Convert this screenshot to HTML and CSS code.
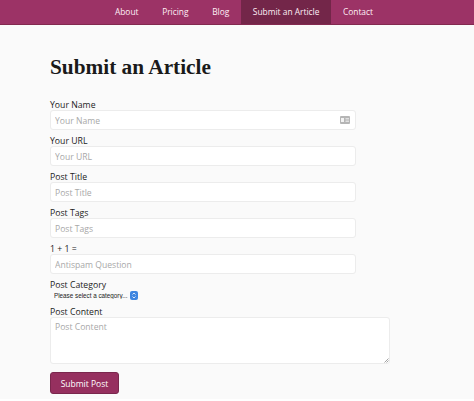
FILE: index.html
```html
<!DOCTYPE html>
<html lang="en">

<head>
    <meta charset="UTF-8">
    <meta name="viewport" content="width=device-width, initial-scale=1.0">
    <title>Submit an Article</title>
    <link rel="stylesheet" href="styles.css">
</head>

<body>
    <nav class="topnav">
        <a href="#">About</a>
        <a href="#">Pricing</a>
        <a href="#">Blog</a>
        <a href="#" class="active">Submit an Article</a>
        <a href="#">Contact</a>
    </nav>

    <main class="content">
        <h1 class="title">Submit an Article</h1>

        <form class="article-form">
            <label for="name" class="texto">Your Name</label>
            <div class="input-wrap">
                <input class="input" type="text" id="name" placeholder="Your Name">
                <svg class="card-icon" width="10" height="8" viewBox="0 0 10 8">
                    <rect width="10" height="8" rx="1" fill="#b5b5b5"></rect>
                    <rect x="1" y="2" width="3" height="4" fill="#f2f2f2"></rect>
                    <path d="M5.5 2.5H9M5.5 4H9M5.5 5.5H9" stroke="#f2f2f2" stroke-width="0.7"></path>
                </svg>
            </div>

            <label for="url" class="texto">Your URL</label>
            <input class="input" type="text" id="url" placeholder="Your URL">

            <label for="ptitle" class="texto">Post Title</label>
            <input class="input" type="text" id="ptitle" placeholder="Post Title">

            <label for="tags" class="texto">Post Tags</label>
            <input class="input" type="text" id="tags" placeholder="Post Tags">

            <label for="spam" class="texto">1 + 1 =</label>
            <input class="input" type="text" id="spam" placeholder="Antispam Question">

            <label for="category" class="texto">Post Category</label>
            <div class="select-wrap">
                <select class="select" id="category">
                    <option>Please select a category...</option>
                </select>
                <svg class="stepper" width="8" height="9" viewBox="0 0 8 9">
                    <rect width="8" height="9" rx="2" fill="#3f86e0"></rect>
                    <path d="M2.500 3.500L4 2l1.500 1.500M2.500 5.500L4 7l1.500-1.500" fill="none" stroke="#ffffff" stroke-width="0.8"></path>
                </svg>
            </div>

            <label for="body" class="texto">Post Content</label>
            <div class="input-wrap">
                <textarea class="input area" id="body" placeholder="Post Content"></textarea>
                <svg class="grip" width="5" height="5" viewBox="0 0 5 5">
                    <path d="M0.500 4.500L4.500 0.500M2.500 4.500L4.500 2.500" stroke="#8c8c8c" stroke-width="0.8"></path>
                </svg>
            </div>

            <button type="button" class="submit">Submit Post</button>
        </form>
    </main>
</body>
</html>
```

FILE: styles.css
```css
* {
    box-sizing: border-box;
}

body {
    margin: 0;
    height: 401px;
    overflow: hidden;
    background-color: #ffffff;
    color: #222222;
    font-family: "Open Sans", sans-serif;
}

.topnav {
    display: flex;
    justify-content: center;
    height: 25px;
    padding-left: 14px;
    background-color: #9c3366;
    border-bottom: 1px solid #82294f;
}

.topnav a {
    padding: 0 11.800px;
    color: #fff0f6;
    font-size: 8.400px;
    line-height: 24px;
    text-decoration: none;
}

.topnav a.active {
    background-color: #732649;
}

.content {
    height: 374px;
    padding: 0 50px;
    background-color: #fafafa;
}

.title {
    margin: 0;
    padding-top: 29px;
    height: 74px;
    color: #1a1a1a;
    font-family: "Liberation Serif", serif;
    font-size: 21.300px;
    line-height: 27px;
}

.article-form {
    display: flex;
    flex-direction: column;
    align-items: flex-start;
}

.texto {
    display: block;
    height: 11px;
    font-size: 8.700px;
    line-height: 12px;
}

.input {
    display: block;
    width: 306px;
    height: 20px;
    margin-bottom: 5px;
    padding: 1px 4px 0;
    background-color: #ffffff;
    border: 1px solid #ececec;
    border-radius: 3px;
    color: #222222;
    font-family: "Open Sans", sans-serif;
    font-size: 8.600px;
}

.input::placeholder {
    color: #a8a8a8;
    opacity: 1;
}

.input-wrap {
    position: relative;
}

.card-icon {
    position: absolute;
    top: 6px;
    right: 6px;
}

.grip {
    position: absolute;
    top: 41px;
    right: 1px;
}

.select-wrap {
    position: relative;
    width: 88px;
    height: 10px;
    margin-bottom: 6px;
}

.select {
    display: block;
    width: 80px;
    height: 10px;
    padding: 0 0 0 4px;
    appearance: none;
    background: transparent;
    border: 0;
    color: #222222;
    font-family: "Liberation Sans", sans-serif;
    font-size: 6.300px;
}

.stepper {
    position: absolute;
    top: 1px;
    right: 0;
}

.area {
    width: 340px;
    height: 47px;
    margin-bottom: 8px;
    padding: 3px 4px;
    resize: none;
}

.submit {
    width: 69px;
    height: 22px;
    padding: 0;
    background-color: #96305f;
    border: 1px solid #7a274d;
    border-radius: 3px;
    color: #ffffff;
    font-family: "Open Sans", sans-serif;
    font-size: 8.500px;
}
```
